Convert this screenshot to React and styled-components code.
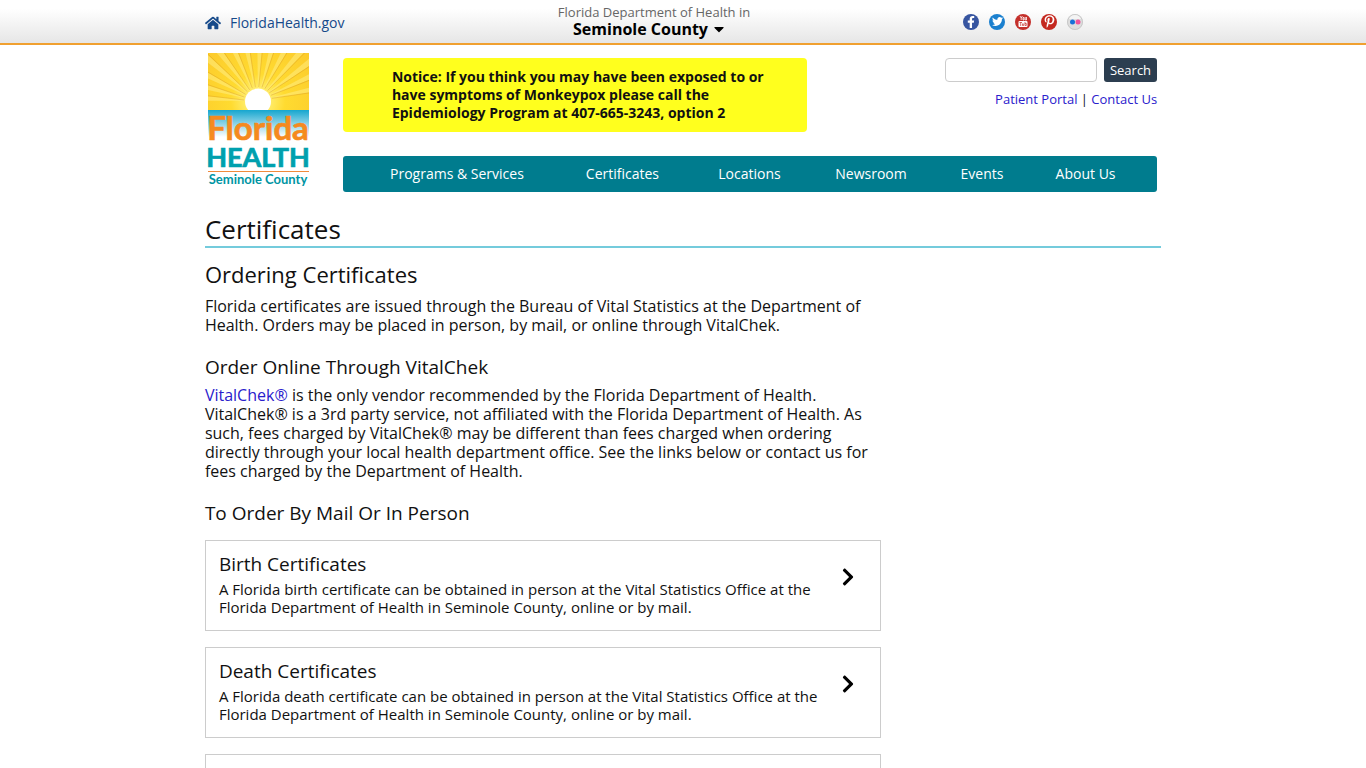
import React from "react";
import styled, { createGlobalStyle } from "styled-components";
import { FaHome, FaCaretDown, FaChevronRight, FaFacebookF, FaTwitter, FaPinterestP } from "react-icons/fa";

const GlobalStyle = createGlobalStyle`
  * {
    box-sizing: border-box;
  }
  body {
    margin: 0;
    background: #fff;
    color: #111;
    font-family: "Open Sans", "Liberation Sans", sans-serif;
    font-size: 16px;
    line-height: 19px;
  }
  h1, h2, h3, p {
    margin: 0;
    font-weight: 400;
  }
  a {
    color: #2a20cc;
    text-decoration: none;
  }
`;

const TopBar = styled.div`
  border-bottom: 2px solid #f0a030;
  background: linear-gradient(#fff, #fff 20%, #e6e6e6);
`;
const Container = styled.div`
  width: 70%;
  margin: 0 auto;
`;
const TopRow = styled(Container)`
  display: grid;
  grid-template-columns: 1fr auto 1fr;
  align-items: center;
  height: 43px;
  padding-right: 58px;
`;
const HomeLink = styled.a`
  display: flex;
  align-items: center;
  gap: 9px;
  color: #164a8a;
  font-size: 14px;
  padding-top: 2px;
`;
const County = styled.div`
  display: flex;
  flex-direction: column;
  align-items: center;
  padding-bottom: 2px;
`;
const Department = styled.span`
  color: #666;
  font-size: 13px;
  line-height: 16px;
`;
const CountyButton = styled.button`
  display: flex;
  align-items: center;
  gap: 3px;
  margin-right: 8px;
  padding: 0;
  border: 0;
  background: none;
  color: #000;
  font: 700 16px/18px "Open Sans", sans-serif;
  cursor: pointer;
`;
const Social = styled.div`
  display: flex;
  justify-content: flex-end;
  gap: 10px;
  padding-right: 20px;
`;
const SocialLink = styled.a`
  display: flex;
  align-items: center;
  justify-content: center;
  width: 16px;
  height: 16px;
  border-radius: 50%;
  background: ${(props) => props.$color};
  color: #fff;
  font-size: 11px;
  line-height: 1;
`;

const Header = styled(Container)`
  display: flex;
  gap: 34px;
  padding: 8px 4px 0 3px;
`;
const LogoLink = styled.a`
  flex: none;
  height: 136px;
`;
const HeaderMain = styled.div`
  flex: 1;
  padding-top: 5px;
`;
const HeaderTop = styled.div`
  display: flex;
  justify-content: space-between;
  align-items: flex-start;
  margin-bottom: 24px;
`;
const Notice = styled.p`
  width: 57%;
  padding: 10px 32px 10px 49px;
  border-radius: 4px;
  background: #ffff1e;
  font-size: 14px;
  font-weight: 700;
  line-height: 18px;
`;
const Tools = styled.div`
  display: flex;
  flex-direction: column;
  align-items: flex-end;
  gap: 8px;
  font-size: 13px;
`;
const SearchForm = styled.form`
  display: flex;
  gap: 7px;
`;
const SearchInput = styled.input`
  width: 152px;
  height: 24px;
  border: 1px solid #ccc;
  border-radius: 4px;
  background: #fff;
`;
const SearchButton = styled.button`
  height: 24px;
  padding: 0 6px;
  border: 0;
  border-radius: 3px;
  background: #2c3e50;
  color: #fff;
  font: 500 13px "Open Sans", sans-serif;
`;
const Nav = styled.nav`
  display: grid;
  grid-template-columns: 190fr 141fr 113fr 130fr 92fr 115fr;
  align-items: center;
  height: 36px;
  padding: 0 14px 2px 19px;
  border-radius: 3px;
  background: #007c8e;
`;
const NavLink = styled.a`
  color: #fff;
  font-size: 14px;
  font-weight: 500;
  text-align: center;
  white-space: nowrap;
`;

const PageTitle = styled.h1`
  margin-top: 21px;
  padding-bottom: 1px;
  border-bottom: 2px solid #74cbdc;
  font-size: 26px;
  line-height: 32px;
`;
const Content = styled.main`
  max-width: 676px;
  padding-top: 12px;
`;
const SectionTitle = styled.h2`
  margin-bottom: 9px;
  font-size: 22px;
  line-height: 28px;
`;
const SubTitle = styled.h3`
  margin-bottom: 7px;
  font-size: 19px;
  line-height: 23px;
`;
const Paragraph = styled.p`
  margin-bottom: 21px;
`;
const CardList = styled.div`
  display: flex;
  flex-direction: column;
  gap: 16px;
  padding-top: 8px;
`;
const Card = styled.a`
  display: flex;
  justify-content: space-between;
  padding: 12px 22px 14px 13px;
  border: 1px solid #ccc;
  color: #111;
`;
const CardTitle = styled.h3`
  margin-bottom: 4px;
  font-size: 19px;
  line-height: 23px;
`;
const CardText = styled.p`
  max-width: 604px;
  font-size: 15px;
  line-height: 18px;
`;
const CardArrow = styled(FaChevronRight)`
  flex: none;
  margin-top: 14px;
  color: #000;
  font-size: 20px;
`;

const navItems = [
  "Programs & Services",
  "Certificates",
  "Locations",
  "Newsroom",
  "Events",
  "About Us",
];

const cards = [
  {
    title: "Birth Certificates",
    text: "A Florida birth certificate can be obtained in person at the Vital Statistics Office at the Florida Department of Health in Seminole County, online or by mail.",
  },
  {
    title: "Death Certificates",
    text: "A Florida death certificate can be obtained in person at the Vital Statistics Office at the Florida Department of Health in Seminole County, online or by mail.",
  },
  {
    title: "Fees",
    text: "Fees for certificates ordered in person or by mail.",
  },
];

const rays = [-86, -74, -62, -49, -37, -24, -11, 3, 16, 29, 42, 54, 66, 79];

const Logo = () => (
  <svg width="101" height="136" viewBox="0 0 101 136" overflow="visible" role="img" aria-label="Florida Health Seminole County">
    <defs>
      <radialGradient id="sky" cx="50" cy="48" r="68" gradientUnits="userSpaceOnUse">
        <stop offset="0.15" stopColor="#ffee70" />
        <stop offset="0.4" stopColor="#ffdb30" />
        <stop offset="1" stopColor="#fccb2c" />
      </radialGradient>
      <linearGradient id="sea" x1="0" y1="0" x2="0" y2="1">
        <stop offset="0" stopColor="#16a6cf" />
        <stop offset="1" stopColor="#fff" />
      </linearGradient>
      <clipPath id="skyClip">
        <rect width="101" height="57" />
      </clipPath>
    </defs>
    <rect width="101" height="57" fill="url(#sky)" />
    <g clipPath="url(#skyClip)">
      {rays.map((angle) => (
        <g key={angle} transform={`rotate(${angle} 50 48)`}>
          <path d="M50 48L45 -30L52 -30Z" fill="#fff08a" opacity="0.5" />
          <path d="M50 34L53 -30" stroke="#dca020" strokeWidth="0.7" opacity="0.6" />
        </g>
      ))}
      <circle cx="50" cy="48.500" r="13" fill="#fff" />
    </g>
    <rect y="57" width="101" height="27" fill="url(#sea)" />
    <g fontFamily="Lato, Open Sans, sans-serif" textAnchor="middle">
      <text x="50" y="87" fontSize="33" fontWeight="700" fill="#f58a1f" stroke="#f58a1f" strokeWidth="0.7">Florida</text>
      <text x="50" y="114" fontSize="27" fontWeight="700" fill="#00a0ae" stroke="#00a0ae" strokeWidth="0.7">HEALTH</text>
      <text x="50" y="131" fontSize="13" fontWeight="700" fill="#0095a3">Seminole County</text>
    </g>
    <rect y="118" width="101" height="1" fill="#f08a3c" />
  </svg>
);

const YouTubeIcon = () => (
  <svg width="10" height="12" viewBox="0 0 10 12" fill="none" stroke="#fff">
    <path d="M2 0L3.200 2V4M4.400 0L3.200 2M5 1.500V4H6V1.500H5M7.200 1V4H8.500V1" strokeWidth="0.8" />
    <rect x="0.500" y="5" width="9" height="6" rx="1" fill="#fff" stroke="none" />
    <path d="M1.500 6.500H4M2.700 6.500V10M4.500 7.500V9.500H5.700V7.500M7 6V9.500H8.300V7.500H7" stroke="#c4302b" strokeWidth="0.7" />
  </svg>
);

const FlickrIcon = () => (
  <svg width="16" height="16" viewBox="0 0 16 16">
    <circle cx="8" cy="8" r="7.500" fill="#dedede" stroke="#c8c8c8" />
    <path d="M2 5A6.500 6.500 0 0 1 14 5Z" fill="#f4f4f4" />
    <circle cx="5.500" cy="8" r="2.500" fill="#1670d8" />
    <circle cx="11" cy="8" r="2.500" fill="#f0539a" />
  </svg>
);

const App = () => {
  return (
    <>
      <GlobalStyle />
      <TopBar>
        <TopRow>
          <HomeLink href="#home">
            <FaHome size={16} />
            FloridaHealth.gov
          </HomeLink>
          <County>
            <Department>Florida Department of Health in</Department>
            <CountyButton type="button">
              Seminole County
              <FaCaretDown size={16} />
            </CountyButton>
          </County>
          <Social>
            <SocialLink href="#facebook" aria-label="Facebook" $color="#3755a0">
              <FaFacebookF size={12} />
            </SocialLink>
            <SocialLink href="#twitter" aria-label="Twitter" $color="#1b80cf">
              <FaTwitter />
            </SocialLink>
            <SocialLink href="#youtube" aria-label="YouTube" $color="#c4302b">
              <YouTubeIcon />
            </SocialLink>
            <SocialLink href="#pinterest" aria-label="Pinterest" $color="#c4281f">
              <FaPinterestP size={13} />
            </SocialLink>
            <SocialLink href="#flickr" aria-label="Flickr" $color="#dedede">
              <FlickrIcon />
            </SocialLink>
          </Social>
        </TopRow>
      </TopBar>
      <Header as="header">
        <LogoLink href="#home">
          <Logo />
        </LogoLink>
        <HeaderMain>
          <HeaderTop>
            <Notice>
              Notice: If you think you may have been exposed to or have symptoms
              of Monkeypox please call the Epidemiology Program at 407-665-3243,
              option 2
            </Notice>
            <Tools>
              <SearchForm>
                <SearchInput type="text" aria-label="Search" />
                <SearchButton type="button">Search</SearchButton>
              </SearchForm>
              <div>
                <a href="#portal">Patient Portal</a> | <a href="#contact">Contact Us</a>
              </div>
            </Tools>
          </HeaderTop>
          <Nav>
            {navItems.map((item) => (
              <NavLink key={item} href="#nav">
                {item}
              </NavLink>
            ))}
          </Nav>
        </HeaderMain>
      </Header>
      <Container>
        <PageTitle>Certificates</PageTitle>
        <Content>
          <SectionTitle>Ordering Certificates</SectionTitle>
          <Paragraph>
            Florida certificates are issued through the Bureau of Vital
            Statistics at the Department of Health. Orders may be placed in
            person, by mail, or online through VitalChek.
          </Paragraph>
          <SubTitle>Order Online Through VitalChek</SubTitle>
          <Paragraph>
            <a href="#vitalchek">VitalChek®</a> is the only vendor recommended
            by the Florida Department of Health. VitalChek® is a 3rd party
            service, not affiliated with the Florida Department of Health. As
            such, fees charged by VitalChek® may be different than fees charged
            when ordering directly through your local health department office.
            See the links below or contact us for fees charged by the Department
            of Health.
          </Paragraph>
          <SubTitle>To Order By Mail Or In Person</SubTitle>
          <CardList>
            {cards.map(({ title, text }) => (
              <Card key={title} href="#certificate">
                <div>
                  <CardTitle>{title}</CardTitle>
                  <CardText>{text}</CardText>
                </div>
                <CardArrow />
              </Card>
            ))}
          </CardList>
        </Content>
      </Container>
    </>
  );
};

export default App;
